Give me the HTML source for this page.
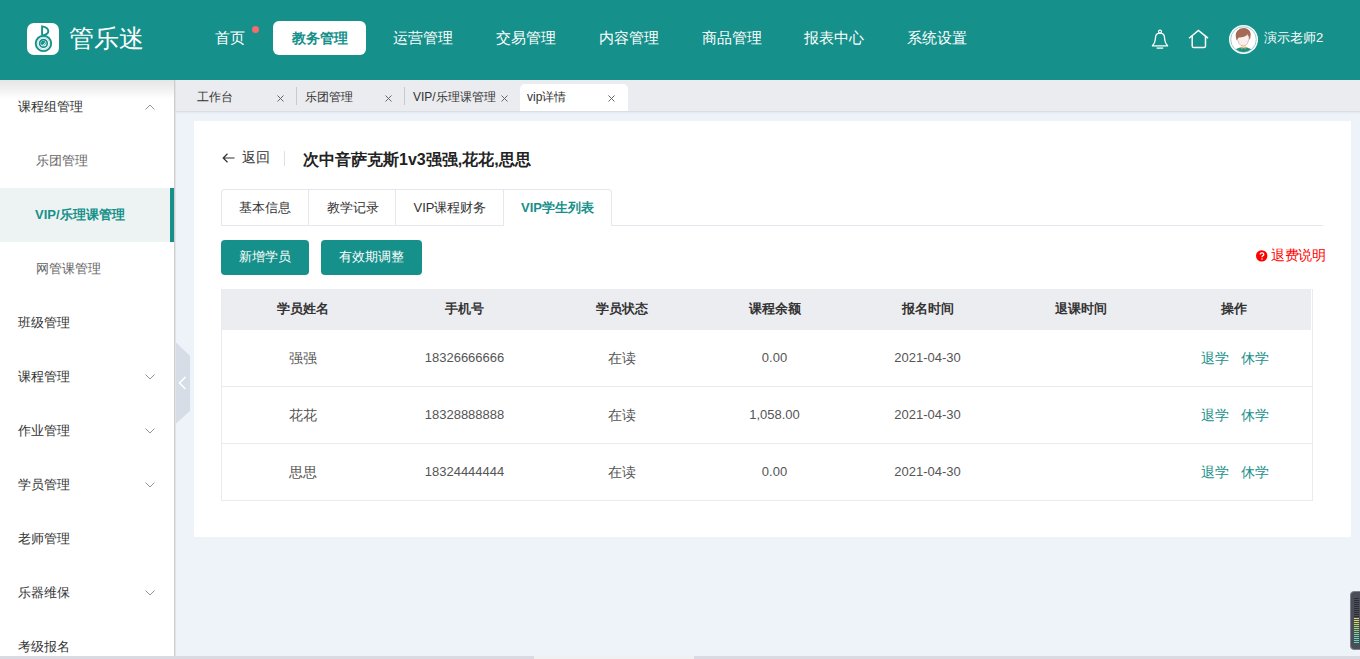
<!DOCTYPE html>
<html><head><meta charset="utf-8">
<style>
*{margin:0;padding:0;box-sizing:border-box}
html,body{width:1360px;height:659px;overflow:hidden;background:#eef2f9;font-family:"Liberation Sans",sans-serif;color:#333}
.abs{position:absolute}
#hdr{position:absolute;left:0;top:0;width:1360px;height:80px;background:#16908a}
.nav{position:absolute;top:21px;height:34px;line-height:34px;font-size:14.5px;color:#fff;white-space:nowrap}
.nav.on{background:#fff;color:#16908a;border-radius:6px;font-weight:bold;padding:0 0 0 19px;font-size:14px}
#side{position:absolute;left:0;top:80px;width:174px;height:576px;background:#fff;overflow:hidden}
#sideb{position:absolute;left:174px;top:80px;width:2px;height:576px;background:linear-gradient(90deg,#cdcdcd 50%,#e2e4e8 50%)}
.si{position:absolute;left:0;width:174px;height:54px;line-height:54px;font-size:13px;color:#333;white-space:nowrap}
.si span{position:absolute;left:18px;top:0}
.si.sub span{left:36px;color:#666}
.si.on{background:#edf3f3}
.si.on span{color:#16908a;font-weight:bold;left:35px}
.si.on:after{content:"";position:absolute;right:0;top:0;width:4px;height:54px;background:#16908a}
.chev{position:absolute;left:145px;top:24px;width:10px;height:6px}
#tabs{position:absolute;left:176px;top:80px;width:1184px;height:32px;background:#ebecef;border-bottom:1px solid #dcdee3;box-shadow:0 1px 2px rgba(0,0,0,0.05)}
.tb{position:absolute;top:0;height:31px;line-height:31px;font-size:12px;color:#333;white-space:nowrap}
.tx{position:absolute;font-size:12px;color:#555}
.sep{position:absolute;top:7px;width:1px;height:18px;background:#c8c9cc}
#card{position:absolute;left:194px;top:121px;width:1157px;height:416px;background:#fff}
.t{position:absolute;white-space:nowrap}
.ctab{position:absolute;top:190px;height:35px;line-height:35px;font-size:13px;color:#333;text-align:center;border-left:1px solid #e4e7ed}
.btn{position:absolute;top:240px;height:35px;line-height:33px;background:#16908a;color:#fff;font-size:13px;border-radius:4px;text-align:center}
.th{position:absolute;top:289px;height:41px;line-height:39px;font-size:13px;font-weight:bold;color:#333;text-align:center}
.td{position:absolute;height:57px;line-height:56px;font-size:13px;color:#555;text-align:center}
.hl{position:absolute;left:221px;width:1092px;height:1px;background:#e8ebf0}
.op{color:#16908a}
</style></head><body>
<div id="hdr">
  <!-- logo -->
  <div class="abs" style="left:27px;top:23px;width:32px;height:32px;background:#fff;border-radius:7px"></div>
  <svg class="abs" style="left:27px;top:23px" width="32" height="32" viewBox="0 0 32 32">
    <circle cx="16.45" cy="20.4" r="7.7" fill="none" stroke="#16908a" stroke-width="1.9"/>
    <circle cx="16.45" cy="20.4" r="5.9" fill="none" stroke="#8cc7c2" stroke-width="0.6"/>
    <circle cx="16.45" cy="20.4" r="3.8" fill="none" stroke="#16908a" stroke-width="1.7"/>
    <circle cx="16.3" cy="20.2" r="2.4" fill="#16908a"/>
    <path d="M17.9 19.6 Q18 21.7 15.6 21.9" fill="none" stroke="#fff" stroke-width="0.8"/>
    <path d="M15.1 12.2 V3.4 Q21.3 4.4 21.3 8.3 Q21.3 11.2 16.3 12.4" fill="none" stroke="#16908a" stroke-width="1.9"/>
  </svg>
  <div class="t" style="left:69px;top:20px;font-size:25px;line-height:36px;color:#fff;font-weight:300">管乐迷</div>

  <div class="nav" style="left:215px">首页</div>
  <div class="abs" style="left:252px;top:26px;width:7px;height:7px;border-radius:50%;background:#f56c6c"></div>
  <div class="nav on" style="left:273px;width:93px">教务管理</div>
  <div class="nav" style="left:393px">运营管理</div>
  <div class="nav" style="left:496px">交易管理</div>
  <div class="nav" style="left:599px">内容管理</div>
  <div class="nav" style="left:702px">商品管理</div>
  <div class="nav" style="left:804px">报表中心</div>
  <div class="nav" style="left:907px">系统设置</div>

  <!-- bell -->
  <svg class="abs" style="left:1150px;top:29px" width="20" height="21" viewBox="0 0 20 21">
    <circle cx="10" cy="2.6" r="1.5" fill="none" stroke="#fff" stroke-width="1.1"/>
    <path d="M2.4 16.8 Q4.8 14.6 5.2 11 L5.7 7.2 Q6.2 4.1 10 4.1 Q13.8 4.1 14.3 7.2 L14.8 11 Q15.2 14.6 17.6 16.8 Z" fill="none" stroke="#fff" stroke-width="1.3" stroke-linejoin="round"/>
    <path d="M6.6 19.1 H13.2" stroke="#fff" stroke-width="1.3"/>
  </svg>
  <!-- home -->
  <svg class="abs" style="left:1187px;top:28px" width="23" height="22" viewBox="0 0 23 22">
    <path d="M2.1 10.2 L11.4 2.4 L21 10.2" fill="none" stroke="#fff" stroke-width="1.5" stroke-linejoin="miter" stroke-linecap="butt"/>
    <path d="M5.2 7.8 V18 Q5.2 19.6 6.8 19.6 H16.9 Q18.5 19.6 18.5 18 V7.8" fill="none" stroke="#fff" stroke-width="1.5"/>
  </svg>
  <!-- avatar -->
  <svg class="abs" style="left:1229px;top:25px" width="29" height="29" viewBox="0 0 29 29">
    <defs><clipPath id="cav"><circle cx="14.5" cy="14.5" r="12.4"/></clipPath></defs>
    <circle cx="14.5" cy="14.5" r="14.5" fill="#fff"/>
    <circle cx="14.5" cy="14.5" r="12.8" fill="none" stroke="#72b8b1" stroke-width="0.7"/>
    <g clip-path="url(#cav)">
      <path d="M4.5 27 Q6.5 23.6 11 22.6 L18 22.6 Q22.5 23.6 24.5 27 V30 H4.5Z" fill="#1a9088"/>
    </g>
    <rect x="12.2" y="19" width="4.6" height="4" fill="#f8e2dc"/>
    <path d="M11.3 22 L12.9 24.6 L14.5 22.6Z M17.7 22 L16.1 24.6 L14.5 22.6Z" fill="#d9a21b"/>
    <path d="M8.3 10 Q8.3 20.9 14.2 20.9 Q20.1 20.9 20.1 10 Z" fill="#fcefeb" stroke="#7a4a3a" stroke-width="0.3"/>
    <path d="M7.6 15.5 Q5.6 9 8.1 6 Q10.6 3 14.6 3.1 Q19 3.2 21 6.5 Q22.6 10 20.6 15 Q20.2 11.2 18.6 9.2 Q15.4 12.6 9.8 12.4 Q8.4 13.6 7.6 15.5Z" fill="#a46a55"/>
  </svg>
  <div class="t" style="left:1264px;top:30px;font-size:13px;line-height:16px;color:#fff">演示老师2</div>
</div>

<!-- sidebar -->
<div id="side">
  <div class="si" style="top:0"><span>课程组管理</span>
    <svg class="chev" viewBox="0 0 10 6"><path d="M0.5 5.5 L5 1 L9.5 5.5" fill="none" stroke="#909399" stroke-width="1"/></svg></div>
  <div class="si sub" style="top:54px"><span>乐团管理</span></div>
  <div class="si sub on" style="top:108px"><span>VIP/乐理课管理</span></div>
  <div class="si sub" style="top:162px"><span>网管课管理</span></div>
  <div class="si" style="top:216px"><span>班级管理</span></div>
  <div class="si" style="top:270px"><span>课程管理</span>
    <svg class="chev" viewBox="0 0 10 6"><path d="M0.5 0.5 L5 5 L9.5 0.5" fill="none" stroke="#909399" stroke-width="1"/></svg></div>
  <div class="si" style="top:324px"><span>作业管理</span>
    <svg class="chev" viewBox="0 0 10 6"><path d="M0.5 0.5 L5 5 L9.5 0.5" fill="none" stroke="#909399" stroke-width="1"/></svg></div>
  <div class="si" style="top:378px"><span>学员管理</span>
    <svg class="chev" viewBox="0 0 10 6"><path d="M0.5 0.5 L5 5 L9.5 0.5" fill="none" stroke="#909399" stroke-width="1"/></svg></div>
  <div class="si" style="top:432px"><span>老师管理</span></div>
  <div class="si" style="top:486px"><span>乐器维保</span>
    <svg class="chev" viewBox="0 0 10 6"><path d="M0.5 0.5 L5 5 L9.5 0.5" fill="none" stroke="#909399" stroke-width="1"/></svg></div>
  <div class="si" style="top:540px"><span>考级报名</span></div>
  <div class="abs" style="left:0;top:0;width:174px;height:19px;background:linear-gradient(#e5e5e5,#f0f0f0 45%,rgba(255,255,255,0))"></div>
</div>
<div id="sideb"></div>

<!-- collapse handle -->
<svg class="abs" style="left:175px;top:342px" width="16" height="82" viewBox="0 0 16 82">
  <path d="M1 0.5 L15 14 L15 69 L1 81.5Z" fill="#d6dde6"/>
  <path d="M10.5 35 L4.5 41 L10.5 47" fill="none" stroke="#fff" stroke-width="1.6"/>
</svg>

<!-- tabs bar -->
<div id="tabs"></div>
<div class="t" style="left:197px;top:89px;font-size:12px;line-height:16px;color:#333">工作台</div>
<svg class="abs" style="left:277px;top:95px" width="7" height="7" viewBox="0 0 7 7"><path d="M0.5 0.5L6.5 6.5M6.5 0.5L0.5 6.5" stroke="#666" stroke-width="1"/></svg>
<div class="sep" style="left:296px;top:87px"></div>
<div class="t" style="left:305px;top:89px;font-size:12px;line-height:16px;color:#333">乐团管理</div>
<svg class="abs" style="left:385px;top:95px" width="7" height="7" viewBox="0 0 7 7"><path d="M0.5 0.5L6.5 6.5M6.5 0.5L0.5 6.5" stroke="#666" stroke-width="1"/></svg>
<div class="sep" style="left:404px;top:87px"></div>
<div class="t" style="left:413px;top:89px;font-size:12px;line-height:16px;color:#333">VIP/乐理课管理</div>
<svg class="abs" style="left:501px;top:95px" width="7" height="7" viewBox="0 0 7 7"><path d="M0.5 0.5L6.5 6.5M6.5 0.5L0.5 6.5" stroke="#666" stroke-width="1"/></svg>
<div class="abs" style="left:520px;top:84px;width:108px;height:27px;background:#fff;border-radius:5px 5px 0 0"></div>
<div class="t" style="left:527px;top:89px;font-size:12px;line-height:16px;color:#333">vip详情</div>
<svg class="abs" style="left:608px;top:95px" width="7" height="7" viewBox="0 0 7 7"><path d="M0.5 0.5L6.5 6.5M6.5 0.5L0.5 6.5" stroke="#666" stroke-width="1"/></svg>

<!-- card -->
<div id="card"></div>
<svg class="abs" style="left:222px;top:153px" width="13" height="10" viewBox="0 0 13 10">
  <path d="M5.5 0.8 L1.2 5 L5.5 9.2 M1.2 5 H12.5" fill="none" stroke="#333" stroke-width="1.2"/>
</svg>
<div class="t" style="left:242px;top:149px;font-size:14px;line-height:17px;color:#333">返回</div>
<div class="abs" style="left:284px;top:151px;width:1px;height:15px;background:#dcdfe6"></div>
<div class="t" style="left:303px;top:150px;font-size:16px;line-height:20px;font-weight:bold;color:#222">次中音萨克斯1v3强强,花花,思思</div>

<!-- card tabs -->
<div class="abs" style="left:221px;top:189px;width:391px;height:37px;border:1px solid #e4e7ed;border-bottom:none;border-radius:4px 4px 0 0"></div>
<div class="abs" style="left:221px;top:225px;width:1102px;height:1px;background:#e4e7ed"></div>
<div class="abs" style="left:504px;top:225px;width:107px;height:1px;background:#fff"></div>
<div class="ctab" style="left:221px;width:88px;border-left:none">基本信息</div>
<div class="ctab" style="left:308px;width:88px">教学记录</div>
<div class="ctab" style="left:395px;width:109px">VIP课程财务</div>
<div class="ctab" style="left:503px;width:108px;color:#16908a;font-weight:bold">VIP学生列表</div>

<!-- buttons -->
<div class="btn" style="left:221px;width:88px">新增学员</div>
<div class="btn" style="left:321px;width:101px">有效期调整</div>
<svg class="abs" style="left:1256px;top:250px" width="12" height="12" viewBox="0 0 12 12">
  <circle cx="5.7" cy="5.9" r="5.7" fill="#f00"/>
  <path d="M4.2 4.6 Q4.2 2.8 6 2.8 Q7.8 2.8 7.8 4.4 Q7.8 5.4 6.6 5.9 Q6 6.2 6 7.2" fill="none" stroke="#fff" stroke-width="1.3"/>
  <circle cx="6" cy="9" r="0.8" fill="#fff"/>
</svg>
<div class="t" style="left:1271px;top:248px;font-size:13.5px;letter-spacing:-0.5px;line-height:16px;color:#f00">退费说明</div>

<!-- table -->
<div class="abs" style="left:221px;top:289px;width:1090px;height:41px;background:#ecedf0"></div>
<div class="abs" style="left:221px;top:289px;width:1px;height:212px;background:#e8ebf0"></div>
<div class="abs" style="left:1312px;top:289px;width:1px;height:212px;background:#e8ebf0"></div>
<div class="hl" style="top:386px"></div>
<div class="hl" style="top:443px"></div>
<div class="hl" style="top:500px"></div>

<div class="th" style="left:221px;width:163px">学员姓名</div>
<div class="th" style="left:384px;width:161px">手机号</div>
<div class="th" style="left:545px;width:153px">学员状态</div>
<div class="th" style="left:698px;width:153px">课程余额</div>
<div class="th" style="left:851px;width:153px">报名时间</div>
<div class="th" style="left:1004px;width:153px">退课时间</div>
<div class="th" style="left:1157px;width:153px">操作</div>

<div class="td" style="top:330px;left:221px;width:163px;font-size:14px">强强</div>
<div class="td" style="top:330px;left:384px;width:161px">18326666666</div>
<div class="td" style="top:330px;left:545px;width:153px;font-size:14px">在读</div>
<div class="td" style="top:330px;left:698px;width:153px">0.00</div>
<div class="td" style="top:330px;left:851px;width:153px">2021-04-30</div>
<div class="td op" style="top:330px;left:1201px;text-align:left;font-size:14px">退学</div><div class="td op" style="top:330px;left:1241px;text-align:left;font-size:14px">休学</div>

<div class="td" style="top:387px;left:221px;width:163px;font-size:14px">花花</div>
<div class="td" style="top:387px;left:384px;width:161px">18328888888</div>
<div class="td" style="top:387px;left:545px;width:153px;font-size:14px">在读</div>
<div class="td" style="top:387px;left:698px;width:153px">1,058.00</div>
<div class="td" style="top:387px;left:851px;width:153px">2021-04-30</div>
<div class="td op" style="top:387px;left:1201px;text-align:left;font-size:14px">退学</div><div class="td op" style="top:387px;left:1241px;text-align:left;font-size:14px">休学</div>

<div class="td" style="top:444px;left:221px;width:163px;font-size:14px">思思</div>
<div class="td" style="top:444px;left:384px;width:161px">18324444444</div>
<div class="td" style="top:444px;left:545px;width:153px;font-size:14px">在读</div>
<div class="td" style="top:444px;left:698px;width:153px">0.00</div>
<div class="td" style="top:444px;left:851px;width:153px">2021-04-30</div>
<div class="td op" style="top:444px;left:1201px;text-align:left;font-size:14px">退学</div><div class="td op" style="top:444px;left:1241px;text-align:left;font-size:14px">休学</div>

<!-- right widget -->
<div class="abs" style="left:1350px;top:591px;width:14px;height:59px;background:#4b4e58;border-radius:4px;border:1px solid #7d8088"></div>
<svg class="abs" style="left:1354px;top:597px" width="6" height="48" viewBox="0 0 6 48">
  <g stroke-width="1">
    <path d="M0 1.5H5M0 3.5H5M0 5.5H5M0 7.5H5M0 9.5H5M0 11.5H5M0 13.5H5M0 15.5H5M0 17.5H5M0 19.5H5" stroke="#2c2e34"/>
    <path d="M0 21.5H5M0 23.5H5M0 25.5H5" stroke="#d9d85a"/>
    <path d="M0 27.5H5M0 29.5H5M0 31.5H5" stroke="#b0d86a"/>
    <path d="M0 33.5H5M0 35.5H5M0 37.5H5" stroke="#7fd88a"/>
    <path d="M0 39.5H5M0 41.5H5M0 43.5H5M0 45.5H5" stroke="#5fd8b8"/>
  </g>
</svg>
<!-- bottom strip -->
<div class="abs" style="left:0;top:656px;width:534px;height:3px;background:#dadbe2"></div>
<div class="abs" style="left:534px;top:656px;width:160px;height:3px;background:#eff0f2"></div>
<div class="abs" style="left:694px;top:656px;width:666px;height:3px;background:#dadbe2"></div>
</body></html>
